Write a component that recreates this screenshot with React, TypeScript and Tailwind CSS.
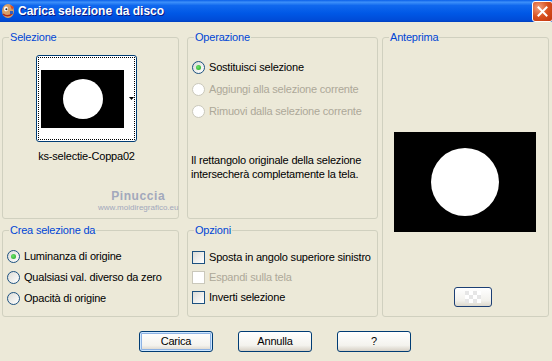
import React from 'react';

type GroupProps = { label: string; className?: string; children?: React.ReactNode };

const Group: React.FC<GroupProps> = ({ label, className, children }) => (
  <fieldset className={`relative rounded-[3px] border border-[#D0D0BF] ${className ?? ''}`}>
    <legend className="ml-[6px] px-[1px] leading-[12px] text-[#0046D5]">{label}</legend>
    {children}
  </fieldset>
);

const Radio: React.FC<{ checked?: boolean; disabled?: boolean }> = ({ checked, disabled }) => (
  <span
    className={`flex h-[13px] w-[13px] shrink-0 items-center justify-center rounded-full border ${
      disabled ? 'border-[#CAC8BB] bg-white' : 'border-[#1C5180] bg-[linear-gradient(135deg,#DCDCD7,#FFFFFF)]'
    }`}
  >
    {checked && <span className="h-[5px] w-[5px] rounded-full bg-[radial-gradient(circle_at_40%_40%,#6BE46A,#21A121)]" />}
  </span>
);

const Check: React.FC<{ disabled?: boolean }> = ({ disabled }) => (
  <span
    className={`h-[13px] w-[13px] shrink-0 border ${
      disabled ? 'border-[#CAC8BB] bg-white' : 'border-[#1C5180] bg-[linear-gradient(135deg,#DCDCD7,#FFFFFF)]'
    }`}
  />
);

const Option: React.FC<{ control: React.ReactNode; text: string; disabled?: boolean; h: string }> = ({ control, text, disabled, h }) => (
  <div className={`flex items-center gap-[4px] whitespace-nowrap pl-[4px] ${h} ${disabled ? 'text-[#ACA899]' : 'text-black'}`}>
    {control}
    <span>{text}</span>
  </div>
);

const XpButton: React.FC<{ label: string; primary?: boolean }> = ({ label, primary }) => (
  <button
    className={`h-[21px] w-[74px] rounded-[3px] border border-[#003C74] bg-[linear-gradient(to_bottom,#FFFFFF,#F4F3EE_70%,#D6D0C5)] text-black ${
      primary ? 'shadow-[inset_0_0_0_1px_#CEE7FF,inset_0_0_0_2px_#8DB2E3]' : ''
    }`}
  >
    {label}
  </button>
);

const AppIcon = () => (
  <svg width="14" height="16" viewBox="0 0 14 16">
    <ellipse cx="7" cy="8" rx="6" ry="7" fill="#D9A066" />
    <ellipse cx="5" cy="6" rx="2" ry="2.4" fill="#FFFFFF" />
    <circle cx="5.4" cy="6.3" r="1" fill="#202020" />
    <path d="M2 11 Q7 15 12 10" stroke="#B0281A" strokeWidth="1.6" fill="none" />
    <path d="M9 2 L13 4 L11 7 Z" fill="#E04A20" />
    <rect x="9" y="8" width="3" height="3" fill="#3060C0" />
  </svg>
);

export default function App() {
  return (
    <div className="h-[361px] w-[552px] overflow-hidden bg-[#ECE9D8] font-['Liberation_Sans',Arial,sans-serif] text-[11px] leading-[13px] tracking-[-0.2px]">
      {/* barra del titolo */}
      <div className="flex h-[22px] items-center justify-between bg-[linear-gradient(to_bottom,#0A5FE8_0%,#3D90FA_10%,#1068EE_25%,#0058E6_60%,#004CD8_90%,#0040C0_100%)] tracking-normal">
        <div className="flex items-center gap-[3px] pl-[1px]">
          <AppIcon />
          <span className="text-[12px] font-bold text-white [text-shadow:1px_1px_0_#0A1883]">Carica selezione da disco</span>
        </div>
        <div className="-mr-[1px] flex h-[21px] w-[21px] items-center justify-center rounded-[3px] border border-white bg-[radial-gradient(circle_at_30%_30%,#F0A080,#D8501E_50%,#C0350F)]">
          <svg width="11" height="11" viewBox="0 0 11 11">
            <path d="M1.5 1.5 L9.5 9.5 M9.5 1.5 L1.5 9.5" stroke="white" strokeWidth="2" strokeLinecap="square" />
          </svg>
        </div>
      </div>

      <div className="flex pl-[2px] pt-[9px]">
        {/* colonna sinistra */}
        <div className="flex w-[177px] flex-col">
          <Group label="Selezione" className="h-[188px]">
            <div className="ml-[33px] mt-[12px] flex w-[101px] flex-col items-center">
              <div className="flex h-[87px] w-[101px] items-center rounded-[3px] border border-[#003C74] bg-white p-[1px]">
                <div className="flex h-full w-full items-center border border-dotted border-black pl-[2px]">
                  <div className="flex h-[58px] w-[83px] items-center justify-center bg-black">
                    <div className="h-[40px] w-[40px] rounded-full bg-white" />
                  </div>
                  <svg width="5" height="3" viewBox="0 0 5 3" className="ml-[5px]">
                    <path d="M0 0 H5 L2.5 3 Z" fill="black" />
                  </svg>
                </div>
              </div>
              <div className="mt-[8px] whitespace-nowrap">ks-selectie-Coppa02</div>
            </div>
            <div className="absolute left-[95px] top-[147px] flex flex-col items-center text-[#A2A8BC] tracking-normal">
              <span className="text-[12px] font-bold leading-[13px] tracking-[0.6px]">Pinuccia</span>
              <span className="text-[8px] leading-[9px]">www.moidiregrafico.eu</span>
            </div>
          </Group>

          <Group label="Crea selezione da" className="mt-[5px] h-[93px]">
            <div className="mt-[10px]">
              <Option h="h-[21px]" control={<Radio checked />} text="Luminanza di origine" />
              <Option h="h-[21px]" control={<Radio />} text="Qualsiasi val. diverso da zero" />
              <Option h="h-[21px]" control={<Radio />} text="Opacità di origine" />
            </div>
          </Group>
        </div>

        {/* colonna centrale */}
        <div className="ml-[8px] flex w-[191px] flex-col">
          <Group label="Operazione" className="h-[188px]">
            <div className="mt-[13px]">
              <Option h="h-[22px]" control={<Radio checked />} text="Sostituisci selezione" />
              <Option h="h-[22px]" control={<Radio disabled />} text="Aggiungi alla selezione corrente" disabled />
              <Option h="h-[22px]" control={<Radio disabled />} text="Rimuovi dalla selezione corrente" disabled />
            </div>
            <p className="mt-[31px] whitespace-nowrap pl-[3px] leading-[14px]">
              Il rettangolo originale della selezione
              <br />
              intersecherà completamente la tela.
            </p>
          </Group>

          <Group label="Opzioni" className="mt-[5px] h-[93px]">
            <div className="mt-[11px]">
              <Option h="h-[20px]" control={<Check />} text="Sposta in angolo superiore sinistro" />
              <Option h="h-[20px]" control={<Check disabled />} text="Espandi sulla tela" disabled />
              <Option h="h-[20px]" control={<Check />} text="Inverti selezione" />
            </div>
          </Group>
        </div>

        {/* colonna destra */}
        <div className="ml-[4px] w-[167px]">
          <Group label="Anteprima" className="h-[286px]">
            <div className="ml-[11px] mt-[89px] flex h-[100px] w-[142px] items-center justify-center bg-black">
              <div className="h-[68px] w-[68px] rounded-full bg-white" />
            </div>
            <button className="ml-[71px] mt-[55px] flex h-[20px] w-[38px] items-center justify-center rounded-[3px] border border-[#1C3F74] bg-[linear-gradient(to_bottom,#FFFFFF,#F2F1EC_70%,#DCD8CC)]">
              <svg width="16" height="12" viewBox="0 0 16 12">
                <rect width="16" height="12" fill="#FFFFFF" />
                <rect x="0" y="0" width="4" height="4" fill="#E6E6E6" />
                <rect x="8" y="0" width="4" height="4" fill="#E6E6E6" />
                <rect x="4" y="4" width="4" height="4" fill="#E6E6E6" />
                <rect x="12" y="4" width="4" height="4" fill="#E6E6E6" />
                <rect x="0" y="8" width="4" height="4" fill="#E6E6E6" />
                <rect x="8" y="8" width="4" height="4" fill="#E6E6E6" />
              </svg>
            </button>
          </Group>
        </div>
      </div>

      <div className="mt-[14px] flex justify-center gap-[25px] pr-[2px]">
        <XpButton label="Carica" primary />
        <XpButton label="Annulla" />
        <XpButton label="?" />
      </div>
    </div>
  );
}
